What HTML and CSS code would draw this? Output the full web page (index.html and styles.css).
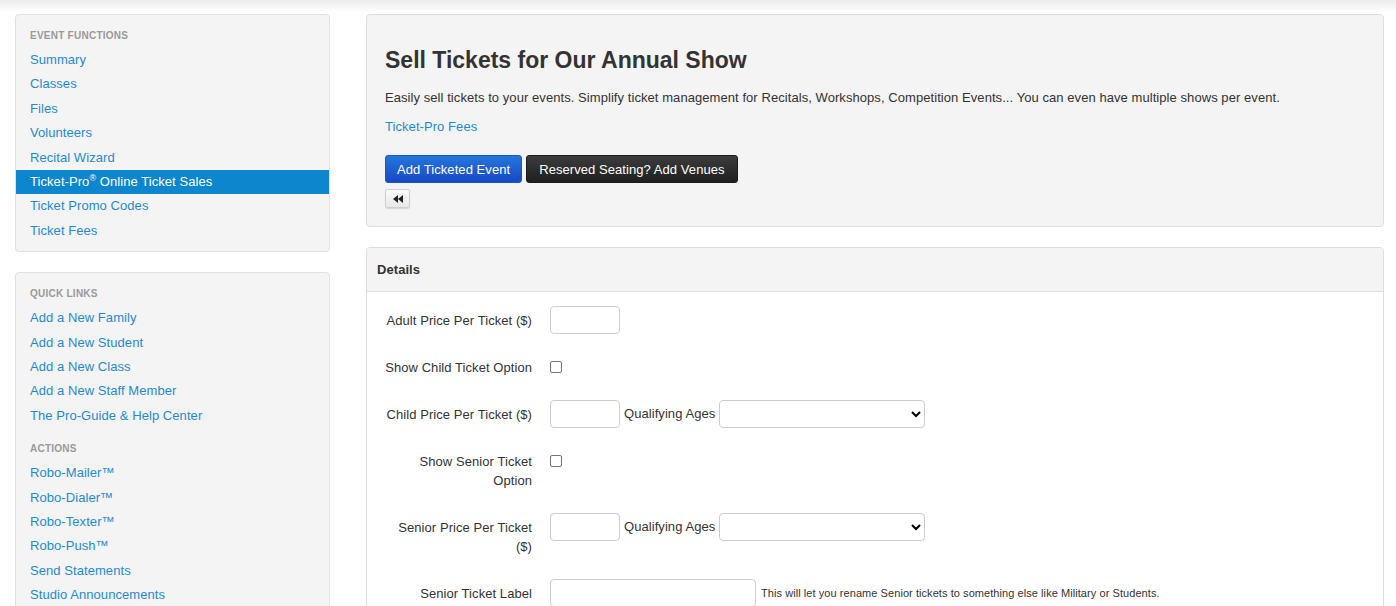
FILE: index.html
```html
<!DOCTYPE html>
<html lang="en">
<head>
<meta charset="utf-8">
<title>Ticket-Pro Online Ticket Sales</title>
<link rel="stylesheet" href="styles.css">
</head>
<body>
<div class="topshade"></div>
<div class="layout">
  <aside class="sidebar">
    <nav class="side-panel">
      <div class="side-heading">Event Functions</div>
      <a class="side-link" href="#">Summary</a>
      <a class="side-link" href="#">Classes</a>
      <a class="side-link" href="#">Files</a>
      <a class="side-link" href="#">Volunteers</a>
      <a class="side-link" href="#">Recital Wizard</a>
      <a class="side-link active" href="#">Ticket-Pro<sup>®</sup> Online Ticket Sales</a>
      <a class="side-link" href="#">Ticket Promo Codes</a>
      <a class="side-link" href="#">Ticket Fees</a>
    </nav>
    <nav class="side-panel">
      <div class="side-heading">Quick Links</div>
      <a class="side-link" href="#">Add a New Family</a>
      <a class="side-link" href="#">Add a New Student</a>
      <a class="side-link" href="#">Add a New Class</a>
      <a class="side-link" href="#">Add a New Staff Member</a>
      <a class="side-link" href="#">The Pro-Guide &amp; Help Center</a>
      <div class="side-heading spaced">Actions</div>
      <a class="side-link" href="#">Robo-Mailer™</a>
      <a class="side-link" href="#">Robo-Dialer™</a>
      <a class="side-link" href="#">Robo-Texter™</a>
      <a class="side-link" href="#">Robo-Push™</a>
      <a class="side-link" href="#">Send Statements</a>
      <a class="side-link" href="#">Studio Announcements</a>
    </nav>
  </aside>

  <main class="main">
    <section class="intro-panel">
      <h2 class="intro-title">Sell Tickets for Our Annual Show</h2>
      <p class="intro-text">Easily sell tickets to your events. Simplify ticket management for Recitals, Workshops, Competition Events... You can even have multiple shows per event.</p>
      <p class="intro-link"><a href="#">Ticket-Pro Fees</a></p>
      <div class="btn-row">
        <button class="btn btn-blue" type="button">Add Ticketed Event</button>
        <button class="btn btn-dark" type="button">Reserved Seating? Add Venues</button>
      </div>
      <button class="btn-back" type="button" aria-label="Back">
        <svg width="10" height="8" viewBox="0 0 10 8"><polygon points="5,0 0,4 5,8" fill="#222"/><polygon points="10,0 5,4 10,8" fill="#222"/></svg>
      </button>
    </section>

    <section class="details-panel">
      <div class="details-head">Details</div>
      <div class="details-body">
        <div class="form-row">
          <label class="form-label">Adult Price Per Ticket ($)</label>
          <div class="form-ctrl"><input class="inp inp-sm" type="text"></div>
        </div>
        <div class="form-row">
          <label class="form-label">Show Child Ticket Option</label>
          <div class="form-ctrl"><input class="chk" type="checkbox"></div>
        </div>
        <div class="form-row">
          <label class="form-label">Child Price Per Ticket ($)</label>
          <div class="form-ctrl">
            <input class="inp inp-sm" type="text">
            <span class="inline-label">Qualifying Ages</span>
            <select class="sel"><option></option></select>
          </div>
        </div>
        <div class="form-row">
          <label class="form-label">Show Senior Ticket Option</label>
          <div class="form-ctrl"><input class="chk" type="checkbox"></div>
        </div>
        <div class="form-row">
          <label class="form-label">Senior Price Per Ticket ($)</label>
          <div class="form-ctrl">
            <input class="inp inp-sm" type="text">
            <span class="inline-label">Qualifying Ages</span>
            <select class="sel"><option></option></select>
          </div>
        </div>
        <div class="form-row">
          <label class="form-label">Senior Ticket Label</label>
          <div class="form-ctrl">
            <input class="inp inp-md" type="text">
            <span class="help">This will let you rename Senior tickets to something else like Military or Students.</span>
          </div>
        </div>
      </div>
    </section>
  </main>
</div>
</body>
</html>
```

FILE: styles.css
```css
* { box-sizing: border-box; }

html, body {
  margin: 0;
  background: #fff;
}

body {
  font-family: "Liberation Sans", Arial, sans-serif;
  font-size: 13px;
  line-height: 18.57px;
  letter-spacing: 0.065px;
  color: #333;
  overflow: hidden;
}

a { color: #1f8ad3; text-decoration: none; }

.topshade {
  height: 12px;
  background: linear-gradient(#ececec, #fff);
}

.layout {
  display: grid;
  grid-template-columns: 315px 1018px;
  column-gap: 36px;
  padding: 2px 12px 0 15px;
  align-items: start;
}

/* Sidebar */
.sidebar {
  display: flex;
  flex-direction: column;
  gap: 20px;
}

.side-panel {
  background: #f4f4f4;
  border: 1px solid #e0e0e0;
  border-radius: 4px;
  padding: 14px 0 8px;
  display: flex;
  flex-direction: column;
}

.side-heading {
  font-size: 10px;
  font-weight: bold;
  line-height: 14px;
  text-transform: uppercase;
  letter-spacing: 0.25px;
  color: #999;
  padding: 0 14px;
  margin-bottom: 4.8px;
}

.side-heading.spaced { margin-top: 14px; }

.side-link {
  display: block;
  padding: 3px 14px;
  line-height: 18.43px;
  font-size: 13px;
  color: #1f8ad3;
}

.side-link.active {
  background: #0d86cd;
  color: #fff;
}

.side-link sup {
  font-size: 9px;
  line-height: 0;
  vertical-align: 5px;
}

/* Main */
.main {
  display: flex;
  flex-direction: column;
  gap: 20px;
}

.intro-panel {
  background: #f4f4f4;
  border: 1px solid #dedede;
  border-radius: 4px;
  padding: 33px 18px 18px;
}

.intro-title {
  margin: 0 0 16px;
  font-size: 23px;
  line-height: 25px;
  font-weight: bold;
  letter-spacing: 0;
  color: #333;
}

.intro-text { margin: 0 0 10px; }

.intro-link { margin: 0 0 19px; }

.btn-row {
  display: flex;
  gap: 4px;
}

.btn {
  height: 28px;
  padding: 0 11px;
  font-family: inherit;
  font-size: 13px;
  letter-spacing: 0.065px;
  color: #fff;
  border-radius: 3px;
  cursor: pointer;
}

.btn-blue {
  background: linear-gradient(#2476dc, #1848c6);
  border: 1px solid #1b55c9;
}

.btn-dark {
  background: linear-gradient(#3c3c3c, #1f1f1f);
  border: 1px solid #1a1a1a;
  padding: 0 12px;
}

.btn-back {
  display: flex;
  align-items: center;
  justify-content: center;
  margin-top: 6px;
  width: 25px;
  height: 19px;
  padding: 0;
  background: linear-gradient(#fbfbfb, #e8e8e8);
  border: 1px solid #d0d0d0;
  border-radius: 2px;
  box-shadow: 0 1px 1px rgba(0,0,0,0.12);
}

/* Details */
.details-panel {
  border: 1px solid #dedede;
  border-radius: 4px;
  background: #fff;
  overflow: hidden;
  min-height: 400px;
}

.details-head {
  height: 44px;
  line-height: 43px;
  padding: 0 10px;
  background: #f4f4f4;
  border-bottom: 1px solid #dedede;
  font-weight: bold;
}

.details-body {
  padding: 14px 15px;
  display: flex;
  flex-direction: column;
  gap: 19px;
}

.form-row {
  display: flex;
  align-items: flex-start;
}

.form-label {
  width: 150px;
  flex: none;
  text-align: right;
  padding: 4.5px 0;
  line-height: 19px;
}

.form-ctrl {
  margin-left: 18px;
  height: 28px;
  display: flex;
  align-items: center;
  gap: 4px;
}

.inp {
  height: 28px;
  border: 1px solid #ccc;
  border-radius: 4px;
  background: #fff;
  font: inherit;
  padding: 0 6px;
}

.inp-sm { width: 70px; }
.inp-md { width: 206px; }

.sel {
  width: 206px;
  height: 28px;
  border: 1px solid #ccc;
  border-radius: 4px;
  background: #fff;
  font: inherit;
}

.chk {
  appearance: none;
  -webkit-appearance: none;
  width: 12px;
  height: 12px;
  margin: 0;
  border: 1px solid #767676;
  border-radius: 2px;
  background: #fff;
}

.help {
  font-size: 11px;
  margin-left: 1px;
}
```
